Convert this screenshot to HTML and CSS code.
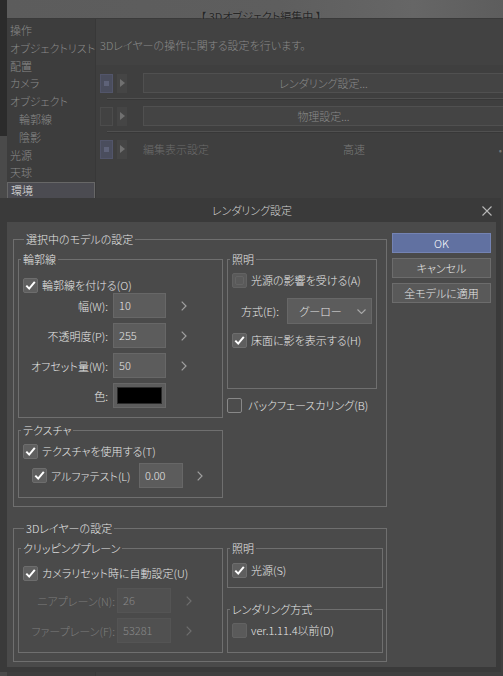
FILE: index.html
```html
<!DOCTYPE html>
<html lang="ja">
<head>
<meta charset="utf-8">
<title>レンダリング設定</title>
<link rel="stylesheet" href="styles.css">
</head>
<body>
<div class="app">
  <div class="app-header"><span class="htext">【 3Dオブジェクト編集中 】</span></div>
  <div class="app-main">
    <ul class="side">
      <li>操作</li>
      <li>オブジェクトリスト</li>
      <li>配置</li>
      <li>カメラ</li>
      <li>オブジェクト</li>
      <li class="sub">輪郭線</li>
      <li class="sub">陰影</li>
      <li>光源</li>
      <li>天球</li>
      <li class="sel">環境</li>
    </ul>
    <div class="content">
      <p class="desc">3Dレイヤーの操作に関する設定を行います。</p>
      <div class="prow">
        <span class="ico blue"><span class="dot"></span></span>
        <span class="arr"><svg width="5" height="8" viewBox="0 0 5 8"><path d="M0 0 L5 4 L0 8 Z" fill="#707070"/></svg></span>
        <span class="pbtn">レンダリング設定...</span>
      </div>
      <div class="sep"></div>
      <div class="prow">
        <span class="ico"></span>
        <span class="arr"><svg width="5" height="8" viewBox="0 0 5 8"><path d="M0 0 L5 4 L0 8 Z" fill="#707070"/></svg></span>
        <span class="pbtn">物理設定...</span>
      </div>
      <div class="sep"></div>
      <div class="prow">
        <span class="ico blue"><span class="dot"></span></span>
        <span class="arr"><svg width="5" height="8" viewBox="0 0 5 8"><path d="M0 0 L5 4 L0 8 Z" fill="#707070"/></svg></span>
        <span class="ptext">編集表示設定</span>
        <span class="pval">高速</span>
        <span class="pend">•</span>
      </div>
    </div>
  </div>
</div>

<div class="dlg">
  <div class="dlg-title">
    <span></span>
    <span class="ttl">レンダリング設定</span>
    <span class="close"><svg width="10" height="10" viewBox="0 0 10 10"><path d="M0.5 0.5 L9.5 9.5 M9.5 0.5 L0.5 9.5" stroke="#b8b8b8" stroke-width="1.1"/></svg></span>
  </div>
  <div class="dlg-body">
    <div class="left">
      <fieldset class="grp g1">
        <legend>選択中のモデルの設定</legend>
        <div class="cols c1">
          <div class="col">
            <fieldset class="sub rinkaku">
              <legend>輪郭線</legend>
              <div class="in">
                <div class="cb"><span class="box on"><svg width="13" height="13" viewBox="0 0 13 13"><path d="M2.3 6.6 L5.2 9.6 L10.8 2.8" fill="none" stroke="#fff" stroke-width="2"/></svg></span><span>輪郭線を付ける(O)</span></div>
                <div class="frow">
                  <span class="flab">幅(W):</span>
                  <span class="inp">10</span>
                  <span class="chev"><svg width="6" height="10" viewBox="0 0 6 10"><path d="M0.7 0.7 L5 5 L0.7 9.3" fill="none" stroke="#a0a0a0" stroke-width="1.2"/></svg></span>
                </div>
                <div class="frow">
                  <span class="flab">不透明度(P):</span>
                  <span class="inp">255</span>
                  <span class="chev"><svg width="6" height="10" viewBox="0 0 6 10"><path d="M0.7 0.7 L5 5 L0.7 9.3" fill="none" stroke="#a0a0a0" stroke-width="1.2"/></svg></span>
                </div>
                <div class="frow">
                  <span class="flab">オフセット量(W):</span>
                  <span class="inp">50</span>
                  <span class="chev"><svg width="6" height="10" viewBox="0 0 6 10"><path d="M0.7 0.7 L5 5 L0.7 9.3" fill="none" stroke="#a0a0a0" stroke-width="1.2"/></svg></span>
                </div>
                <div class="frow">
                  <span class="flab">色:</span>
                  <span class="inp swatch"><span class="black"></span></span>
                </div>
              </div>
            </fieldset>
            <fieldset class="sub tex">
              <legend>テクスチャ</legend>
              <div class="in">
                <div class="cb"><span class="box on"><svg width="13" height="13" viewBox="0 0 13 13"><path d="M2.3 6.6 L5.2 9.6 L10.8 2.8" fill="none" stroke="#fff" stroke-width="2"/></svg></span><span>テクスチャを使用する(T)</span></div>
                <div class="arow">
                  <div class="cb"><span class="box on"><svg width="13" height="13" viewBox="0 0 13 13"><path d="M2.3 6.6 L5.2 9.6 L10.8 2.8" fill="none" stroke="#fff" stroke-width="2"/></svg></span><span>アルファテスト(L)</span></div>
                  <span class="inp">0.00</span>
                  <span class="chev"><svg width="6" height="10" viewBox="0 0 6 10"><path d="M0.7 0.7 L5 5 L0.7 9.3" fill="none" stroke="#a0a0a0" stroke-width="1.2"/></svg></span>
                </div>
              </div>
            </fieldset>
          </div>
          <div class="col">
            <fieldset class="sub shomei1">
              <legend>照明</legend>
              <div class="in">
                <div class="cb"><span class="box dis"><span class="inner"></span></span><span>光源の影響を受ける(A)</span></div>
                <div class="srow">
                  <span class="slab">方式(E):</span>
                  <span class="sel"><span class="stext">グーロー</span><span class="sarrow"><svg width="9" height="5" viewBox="0 0 9 5"><path d="M0.5 0.5 L4.5 4.5 L8.5 0.5" fill="none" stroke="#a8a8a8" stroke-width="1.1"/></svg></span></span>
                </div>
                <div class="cb"><span class="box on"><svg width="13" height="13" viewBox="0 0 13 13"><path d="M2.3 6.6 L5.2 9.6 L10.8 2.8" fill="none" stroke="#fff" stroke-width="2"/></svg></span><span>床面に影を表示する(H)</span></div>
              </div>
            </fieldset>
            <div class="cb backface"><span class="box off"></span><span>バックフェースカリング(B)</span></div>
          </div>
        </div>
      </fieldset>

      <fieldset class="grp g2">
        <legend>3Dレイヤーの設定</legend>
        <div class="cols c2">
          <div class="col">
            <fieldset class="sub clip">
              <legend>クリッピングプレーン</legend>
              <div class="in">
                <div class="cb"><span class="box on"><svg width="13" height="13" viewBox="0 0 13 13"><path d="M2.3 6.6 L5.2 9.6 L10.8 2.8" fill="none" stroke="#fff" stroke-width="2"/></svg></span><span>カメラリセット時に自動設定(U)</span></div>
                <div class="frow crow">
                  <span class="flab">ニアプレーン(N):</span>
                  <span class="inp">26</span>
                  <span class="chev"><svg width="6" height="10" viewBox="0 0 6 10"><path d="M0.7 0.7 L5 5 L0.7 9.3" fill="none" stroke="#6e6e6e" stroke-width="1.2"/></svg></span>
                </div>
                <div class="frow crow">
                  <span class="flab">ファープレーン(F):</span>
                  <span class="inp">53281</span>
                  <span class="chev"><svg width="6" height="10" viewBox="0 0 6 10"><path d="M0.7 0.7 L5 5 L0.7 9.3" fill="none" stroke="#6e6e6e" stroke-width="1.2"/></svg></span>
                </div>
              </div>
            </fieldset>
          </div>
          <div class="col">
            <fieldset class="sub shomei2">
              <legend>照明</legend>
              <div class="in">
                <div class="cb"><span class="box on"><svg width="13" height="13" viewBox="0 0 13 13"><path d="M2.3 6.6 L5.2 9.6 L10.8 2.8" fill="none" stroke="#fff" stroke-width="2"/></svg></span><span>光源(S)</span></div>
              </div>
            </fieldset>
            <fieldset class="sub render">
              <legend>レンダリング方式</legend>
              <div class="in">
                <div class="cb"><span class="box dis"></span><span>ver.1.11.4以前(D)</span></div>
              </div>
            </fieldset>
          </div>
        </div>
      </fieldset>
    </div>
    <div class="right">
      <div class="btn ok">OK</div>
      <div class="btn">キャンセル</div>
      <div class="btn">全モデルに適用</div>
    </div>
  </div>
</div>
</body>
</html>
```
FILE: styles.css
```css
html, body {
  margin: 0;
  padding: 0;
}
body {
  width: 503px;
  height: 676px;
  overflow: hidden;
  position: relative;
  background: #404040;
  font-family: "Noto Sans CJK JP", "Noto Sans", sans-serif;
  font-feature-settings: "palt";
  font-weight: 300;
}

/* ---------- dimmed application behind ---------- */
.app {
  height: 676px;
  box-sizing: border-box;
  padding-left: 7px;
  background: linear-gradient(#2b2b2b 0, #2b2b2b 136px, #4a4a4a 136px);
}
.app-header {
  height: 19px;
  box-sizing: border-box;
  border-bottom: 1px solid #3a3a3a;
  background: linear-gradient(90deg, #5c5c5c, #5e5e5e 55%, #666666 82%, #5d5d5d);
  text-align: center;
  padding: 2px 0 0 12px;
}
.htext {
  display: inline-block;
  font-size: 11px;
  line-height: 15px;
  font-weight: 400;
  color: #262626;
  text-shadow: 0 0 2px rgba(120,120,120,0.8);
  white-space: pre;
}
.app-main {
  display: flex;
  height: 657px;
  background: #3f3f3f;
}
.side {
  width: 88px;
  margin: 0;
  padding: 3px 0 0;
  list-style: none;
  font-size: 11px;
  color: #8a8a8a;
  background: #3d3d3d;
}
.side li {
  height: 17.8px;
  line-height: 17.8px;
  padding-left: 3px;
  white-space: nowrap;
}
.side li.sub {
  padding-left: 12px;
}
.side li.sel {
  background: #4b4b51;
}
.content {
  flex: 1;
  border-left: 1px solid #383838;
  padding-left: 4px;
  min-width: 0;
}
.desc {
  margin: 0;
  height: 46px;
  box-sizing: border-box;
  padding-top: 17px;
  font-size: 11px;
  line-height: 18px;
  color: #8a8a8a;
  background: #424242;
  margin-left: -4px;
  padding-left: 4px;
}
.prow {
  display: flex;
  align-items: center;
  height: 20px;
}
.content > .prow:first-of-type {
  margin-top: 8px;
}
.ico {
  width: 13px;
  height: 19px;
  box-sizing: border-box;
  border: 1px solid #4c4c4c;
  background: #424242;
  display: flex;
  align-items: center;
  justify-content: center;
}
.ico.blue {
  background: #4a4d5d;
  border-color: #52556a;
}
.ico .dot {
  width: 5px;
  height: 5px;
  background: #5e6278;
}
.arr {
  width: 10px;
  height: 19px;
  margin-left: 4px;
  background: #454545;
  display: flex;
  align-items: center;
  justify-content: center;
}
.pbtn {
  flex: 1;
  margin-left: 16px;
  height: 20px;
  box-sizing: border-box;
  border: 1px solid #505050;
  border-right: none;
  background: #444444;
  text-align: center;
  font-size: 11px;
  line-height: 18px;
  color: #8a8a8a;
}
.ptext {
  margin-left: 16px;
  width: 200px;
  font-size: 11px;
  color: #6c6c6c;
}
.pval {
  width: 150px;
  font-size: 11px;
  color: #7a7a7a;
}
.pend {
  margin-left: auto;
  margin-right: 1px;
  font-size: 10px;
  color: #777;
}
.sep {
  height: 0;
  margin: 5px 0 6px 7px;
  border-top: 1px solid #505050;
  border-bottom: 1px solid #383838;
}

/* ---------- dialog (overlay) ---------- */
.dlg {
  position: absolute;
  left: 0;
  top: 198px;
  width: 501px;
  height: 474px;
  background: #3a3a3a;
  display: flex;
  flex-direction: column;
  color: #e6e6e6;
}
.dlg-title {
  height: 24px;
  display: grid;
  grid-template-columns: 1fr auto 1fr;
  align-items: center;
}
.ttl {
  font-size: 11px;
  line-height: 24px;
  color: #d2d2d2;
  padding-left: 3px;
}
.close {
  justify-self: end;
  margin-right: 9px;
  display: flex;
  margin-top: 1px;
}
.dlg-body {
  flex: 1;
  margin: 0 5px 5px 7px;
  background: #4a4a4a;
  display: flex;
  gap: 5px;
  padding: 9px 5px 0 6px;
}
.left {
  width: 374px;
  display: flex;
  flex-direction: column;
  gap: 13px;
}
.right {
  width: 99px;
  display: flex;
  flex-direction: column;
  gap: 5px;
  padding-top: 2px;
}

/* fieldsets */
fieldset {
  margin: 0;
  min-width: 0;
  border: 1px solid #6f6f6f;
  padding: 0;
}
legend {
  padding: 0 2px;
  font-size: 11px;
  line-height: 16px;
  color: #e6e6e6;
  white-space: nowrap;
}
.grp > legend {
  margin-left: 6px;
}
.sub > legend {
  margin-left: 2px;
}
.grp {
  padding: 4px 0 8px 4px;
}
.cols {
  display: grid;
  column-gap: 4px;
  align-items: start;
}
.c1 {
  grid-template-columns: 205px 150px;
}
.c2 {
  grid-template-columns: 205px 156px;
}
.col {
  display: flex;
  flex-direction: column;
}
.in {
  padding-left: 4px;
}

/* checkbox */
.cb {
  display: flex;
  align-items: center;
  gap: 4px;
  height: 16px;
  font-size: 11px;
  color: #e6e6e6;
  white-space: nowrap;
}
.box {
  width: 15px;
  height: 15px;
  box-sizing: border-box;
  border-radius: 2px;
  flex: none;
  display: flex;
  align-items: center;
  justify-content: center;
}
.box.on {
  background: #5f5f5f;
  border: 1px solid #6d6d6d;
}
.box.off {
  background: #4c4c4c;
  border: 1px solid #888888;
}
.box.dis {
  background: #5a5a5a;
  border: 1px solid #626262;
}
.box .inner {
  width: 7px;
  height: 7px;
  border: 1px solid #646464;
  border-radius: 2px;
}

/* numeric inputs */
.inp {
  display: block;
  height: 25px;
  box-sizing: border-box;
  background: #5c5c5c;
  border: 1px solid #676767;
  padding-left: 5px;
  font-size: 11px;
  line-height: 22px;
  color: #e4e4e4;
}
.chev {
  display: flex;
  margin-left: 10px;
}
.frow {
  display: grid;
  grid-template-columns: 85px 53px auto;
  column-gap: 5px;
  align-items: center;
  height: 25px;
  margin-top: 5px;
}
.flab {
  text-align: right;
  font-size: 11px;
  color: #e6e6e6;
  white-space: nowrap;
}
.swatch {
  padding: 3px;
}
.black {
  display: block;
  height: 17px;
  background: #000;
  border: 1px solid #2a2a2a;
  box-sizing: border-box;
}

/* 輪郭線 */
.rinkaku .in {
  padding-top: 10px;
  padding-bottom: 9px;
}
.rinkaku .cb + .frow {
  margin-top: 0;
}

/* テクスチャ */
.tex {
  margin-top: 4px;
}
.tex .in {
  padding-top: 5px;
  padding-bottom: 9px;
}
.arow {
  display: grid;
  grid-template-columns: 102px 44px auto;
  column-gap: 5px;
  align-items: center;
  height: 25px;
  margin-top: 4px;
  padding-left: 9px;
}
.arow .chev {
  margin-left: 9px;
}

/* 照明 (model) */
.shomei1 .in {
  padding-top: 5px;
  padding-bottom: 40px;
}
.srow {
  display: grid;
  grid-template-columns: 46px 85px;
  align-items: center;
  height: 26px;
  margin: 10px 0 8px 9px;
}
.slab {
  font-size: 11px;
  color: #e6e6e6;
  white-space: nowrap;
}
.sel {
  height: 26px;
  box-sizing: border-box;
  background: #5c5c5c;
  border: 1px solid #676767;
  display: flex;
  align-items: center;
  font-size: 11px;
  color: #e4e4e4;
}
.stext {
  flex: 1;
  text-align: center;
  padding-left: 2px;
}
.sarrow {
  width: 20px;
  display: flex;
  justify-content: center;
}
.backface {
  margin-top: 8px;
  gap: 6px;
}

/* clipping plane */
.clip .in {
  padding-top: 9px;
  padding-bottom: 9px;
}
.crow {
  grid-template-columns: 92px 54px auto;
  column-gap: 2px;
}
.crow.frow {
  margin-top: 5px;
}
.clip .cb + .crow {
  margin-top: 7px;
}
.crow .flab {
  color: #7c7c7c;
}
.crow .inp {
  background: #505050;
  border-color: #545454;
  color: #8a8a8a;
}
.crow .chev {
  margin-left: 13px;
}

/* 照明 (layer) */
.shomei2 .in {
  padding-top: 6px;
  padding-bottom: 9px;
}
.render {
  margin-top: 13px;
}
.render .in {
  padding-top: 5px;
  padding-bottom: 14px;
}

/* buttons */
.btn {
  height: 20px;
  box-sizing: border-box;
  border: 1px solid #6c6c6c;
  background: #595959;
  color: #e8e8e8;
  font-size: 11px;
  line-height: 18px;
  text-align: center;
}
.btn.ok {
  background: #6171a1;
  border-color: #7483b3;
  color: #ffffff;
}
```
